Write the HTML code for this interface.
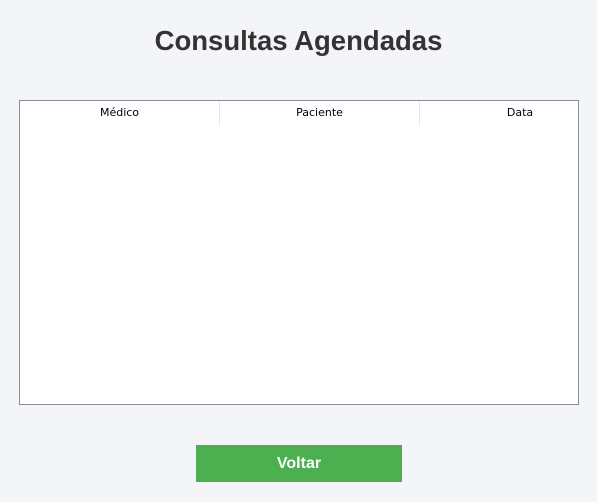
<!DOCTYPE html>
<html><head><style>
body{margin:0;background:#f4f5f9;width:597px;height:502px;overflow:hidden;font-family:"Liberation Sans",sans-serif;position:relative}
h1{position:absolute;top:26px;left:0;width:597px;text-align:center;margin:0;font-size:27.5px;font-weight:bold;color:#333;line-height:30px}
.box{position:absolute;left:19px;top:100px;width:558px;height:303px;background:#fff;border:1px solid #8a8d93;overflow:hidden}
.col{position:absolute;top:0;height:24px;width:199px;text-align:center;line-height:24px;color:#000;font-family:"DejaVu Sans","Liberation Sans",sans-serif;font-size:11px}
.c1{left:0;border-right:1px solid #e5e5e5}
.c2{left:200px;border-right:1px solid #e5e5e5}
.c3{left:400px;width:200px}
.btn{position:absolute;left:196px;top:445px;width:206px;height:37px;background:#4caf50;color:#fff;font-weight:bold;font-size:16px;text-align:center;line-height:37px}
</style></head><body>
<h1>Consultas Agendadas</h1>
<div class="box">
<div class="col c1">Médico</div>
<div class="col c2">Paciente</div>
<div class="col c3">Data</div>
</div>
<div class="btn">Voltar</div>
</body></html>
